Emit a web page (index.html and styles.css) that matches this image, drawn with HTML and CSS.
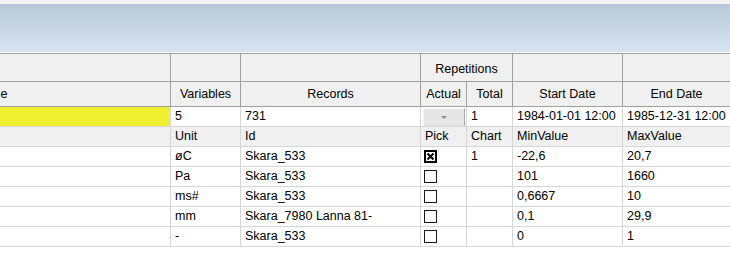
FILE: index.html
```html
<!DOCTYPE html>
<html>
<head>
<meta charset="utf-8">
<link rel="stylesheet" href="styles.css">
</head>
<body>
<div class="chrome">
  <div class="band"></div>
  <div class="sep"></div>
</div>
<div class="grid">
  <!-- header row 1 -->
  <div class="h h1"></div>
  <div class="h h1"></div>
  <div class="h h1"></div>
  <div class="h h1 c span2">Repetitions</div>
  <div class="h h1"></div>
  <div class="h h1 last"></div>
  <!-- header row 2 -->
  <div class="h h2 name">Name</div>
  <div class="h h2 c">Variables</div>
  <div class="h h2 c">Records</div>
  <div class="h h2 c">Actual</div>
  <div class="h h2 c">Total</div>
  <div class="h h2 c">Start Date</div>
  <div class="h h2 c last">End Date</div>
  <!-- yellow row -->
  <div class="d yellow"></div>
  <div class="d">5</div>
  <div class="d">731</div>
  <div class="d combo"><span class="btn"><span class="tri"></span></span></div>
  <div class="d">1</div>
  <div class="d">1984-01-01 12:00</div>
  <div class="d last">1985-12-31 12:00</div>
  <!-- sub header -->
  <div class="d sub"></div>
  <div class="d sub">Unit</div>
  <div class="d sub">Id</div>
  <div class="d sub">Pick</div>
  <div class="d sub">Chart</div>
  <div class="d sub">MinValue</div>
  <div class="d sub last">MaxValue</div>
  <!-- rows -->
  <div class="d"></div>
  <div class="d">øC</div>
  <div class="d">Skara_533</div>
  <div class="d chk"><svg class="box" width="13" height="13" viewBox="0 0 13 13"><rect x="0.5" y="0.5" width="12" height="12" fill="#fff" stroke="#000"/><rect x="1.5" y="1.5" width="10" height="10" fill="none" stroke="#000"/><path d="M3.5 3.5 L9.5 9.5 M9.5 3.5 L3.5 9.5" stroke="#000" stroke-width="2"/></svg></div>
  <div class="d">1</div>
  <div class="d">-22,6</div>
  <div class="d last">20,7</div>

  <div class="d"></div>
  <div class="d">Pa</div>
  <div class="d">Skara_533</div>
  <div class="d chk"><span class="ubox"></span></div>
  <div class="d"></div>
  <div class="d">101</div>
  <div class="d last">1660</div>

  <div class="d"></div>
  <div class="d">ms#</div>
  <div class="d">Skara_533</div>
  <div class="d chk"><span class="ubox"></span></div>
  <div class="d"></div>
  <div class="d">0,6667</div>
  <div class="d last">10</div>

  <div class="d"></div>
  <div class="d">mm</div>
  <div class="d">Skara_7980 Lanna 81-</div>
  <div class="d chk"><span class="ubox"></span></div>
  <div class="d"></div>
  <div class="d">0,1</div>
  <div class="d last">29,9</div>

  <div class="d"></div>
  <div class="d">-</div>
  <div class="d">Skara_533</div>
  <div class="d chk"><span class="ubox"></span></div>
  <div class="d"></div>
  <div class="d">0</div>
  <div class="d last">1</div>
</div>
</body>
</html>
```
FILE: styles.css
```css
html, body {
  margin: 0;
  padding: 0;
  background: #ffffff;
  overflow: hidden;
}
body {
  width: 730px;
  height: 254px;
  font-family: "Liberation Sans", Arial, sans-serif;
  font-size: 12.5px;
  color: #000;
}
.chrome {
  background: #f3f3f3;
  padding-top: 4px;
}
.band {
  height: 48px;
  background: linear-gradient(#bac9d8, #d7e4f0);
}
.sep {
  height: 1px;
  background: #f7f7f7;
  border-bottom: 1px solid #a3a3a3;
}
.grid {
  display: grid;
  grid-template-columns: 171px 70px 180px 46px 46px 110px 1fr;
  grid-auto-rows: 20px;
  grid-template-rows: 28px 25px;
}
.grid > div {
  box-sizing: border-box;
  white-space: nowrap;
  overflow: hidden;
}
.h {
  background: #f0f0f0;
  border-right: 1px solid #a0a0a0;
  border-bottom: 1px solid #a0a0a0;
  display: flex;
  align-items: center;
}
.h1 {
  padding-top: 2px;
}
.c {
  justify-content: center;
}
.span2 {
  grid-column: span 2;
}
.name {
  text-indent: -26px;
  padding-left: 0;
}
.last {
  border-right: none !important;
}
.d {
  border-right: 1px solid #d6d6d6;
  border-bottom: 1px solid #d6d6d6;
  padding-left: 4px;
  line-height: 18px;
}
.sub {
  background: #f0f0f0;
}
.yellow {
  background: #f0f032;
}
.combo {
  padding: 1px 1px 0 2px;
}
.btn {
  display: flex;
  align-items: center;
  justify-content: center;
  height: 17px;
  background: #e6e6e6;
  border-right: 1px solid #a8a8a8;
  border-bottom: 1px solid #a8a8a8;
  border-top: 1px solid #f6f6f6;
  border-left: 1px solid #f6f6f6;
}
.tri {
  width: 0;
  height: 0;
  border-left: 3px solid transparent;
  border-right: 3px solid transparent;
  border-top: 3px solid #8a8a8a;
}
.chk {
  display: flex;
  align-items: center;
  padding-left: 3px;
}
.box {
  display: block;
}
.ubox {
  display: block;
  width: 13px;
  height: 13px;
  box-sizing: border-box;
  border: 1px solid #1a1a1a;
  background: #fff;
}
```
